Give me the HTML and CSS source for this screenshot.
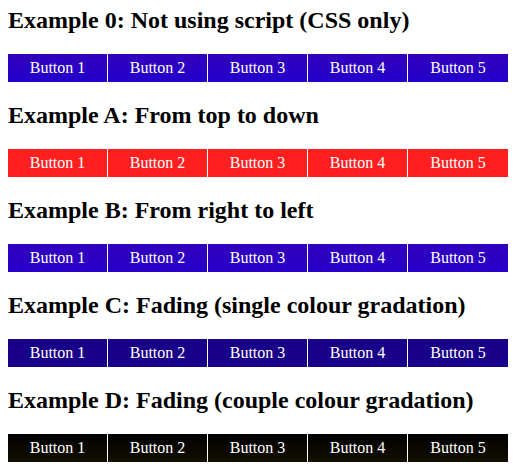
FILE: index.html
```html
<!DOCTYPE html>
<html>
<head>
<meta charset="utf-8">
<title>Menu gradients</title>
<link rel="stylesheet" href="styles.css">
</head>
<body>
<h2>Example 0: Not using script (CSS only)</h2>
<ul class="menu menu-css">
  <li>Button 1</li><li>Button 2</li><li>Button 3</li><li>Button 4</li><li>Button 5</li>
</ul>
<h2>Example A: From top to down</h2>
<ul class="menu menu-a">
  <li>Button 1</li><li>Button 2</li><li>Button 3</li><li>Button 4</li><li>Button 5</li>
</ul>
<h2>Example B: From right to left</h2>
<ul class="menu menu-b">
  <li>Button 1</li><li>Button 2</li><li>Button 3</li><li>Button 4</li><li>Button 5</li>
</ul>
<h2>Example C: Fading (single colour gradation)</h2>
<ul class="menu menu-c">
  <li>Button 1</li><li>Button 2</li><li>Button 3</li><li>Button 4</li><li>Button 5</li>
</ul>
<h2>Example D: Fading (couple colour gradation)</h2>
<ul class="menu menu-d">
  <li>Button 1</li><li>Button 2</li><li>Button 3</li><li>Button 4</li><li>Button 5</li>
</ul>
</body>
</html>
```
FILE: styles.css
```css
body {
  margin: 0;
  padding: 7px 8px;
  font-family: "Liberation Serif", "Times New Roman", serif;
  background: #fff;
}

h2 {
  margin: 0 0 20px;
  font-size: 24px;
  font-weight: bold;
  color: #000;
}

.menu {
  display: flex;
  list-style: none;
  margin: 0 0 20px;
  padding: 0;
  width: 500px;
}

.menu li {
  box-sizing: border-box;
  width: 100px;
  height: 28px;
  border-right: 1px solid #fff;
  color: #fff;
  font-size: 16px;
  line-height: 28px;
  text-align: center;
}

.menu li:last-child {
  border-right: none;
}

.menu-css li {
  background: linear-gradient(to bottom, #3300bb, #2200cc);
}

.menu-a li {
  background: #ff1f1f;
}

.menu-b li {
  background: linear-gradient(to bottom, #3200bd, #2500c9);
}

.menu-c li {
  background: #180088;
}

.menu-d li {
  background: linear-gradient(to bottom, #000000, #120e00);
}
```
